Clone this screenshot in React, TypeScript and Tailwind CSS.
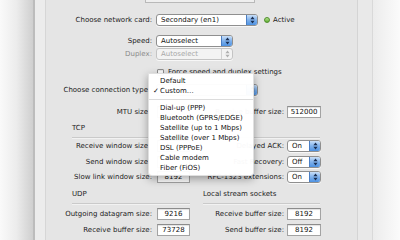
import React from 'react';

/* ─────────────── small aqua controls ─────────────── */
const Arrows: React.FC<{ color?: string }> = ({ color = '#1b2f52' }) => (
  <svg width="5" height="8" viewBox="0 0 5 8" aria-hidden="true">
    <path d="M2.5 0.5 L4.6 3.2 H0.4Z M2.5 7.5 L4.6 4.8 H0.4Z" fill={color} />
  </svg>
);

interface PopupProps {
  text?:     string;
  width:     string;
  disabled?: boolean;
}

const Popup: React.FC<PopupProps> = ({ text, width, disabled = false }) => (
  <div
    className={`${width} h-[12px] flex items-stretch rounded-[3px] border overflow-hidden shadow-[0_1px_0_rgba(255,255,255,0.7)] ${
      disabled ? 'border-[#c4c4c4] bg-[#f3f3f3]' : 'border-[#8f8f8f] bg-white'
    }`}
  >
    <span
      className={`flex-1 pl-[4px] leading-[11px] truncate ${
        disabled ? 'text-[#a8a8a8]' : 'text-[#111]'
      }`}
    >
      {text}
    </span>
    {disabled ? (
      <span className="w-[11px] flex items-center justify-center border-l border-[#d2d2d2]">
        <Arrows color="#b0b0b0" />
      </span>
    ) : (
      <span className="w-[11px] flex items-center justify-center border-l border-[#4b7fc4] bg-gradient-to-b from-[#c9dff8] via-[#7fb1ec] to-[#4d92e2]">
        <Arrows />
      </span>
    )}
  </div>
);

const Box: React.FC<{ value?: string; width?: string }> = ({ value, width = 'w-[33px]' }) => (
  <div
    className={`${width} h-[12px] bg-white border border-[#a3a3a3] border-t-[#8c8c8c] text-center leading-[10px] text-[#111] shadow-[inset_0_1px_1px_rgba(0,0,0,0.12)]`}
  >
    {value}
  </div>
);

const LeftLabel: React.FC<{ children: React.ReactNode; muted?: boolean }> = ({ children, muted }) => (
  <span className={`w-[106px] text-right whitespace-nowrap ${muted ? 'text-[#8a8a8a]' : 'text-[#222]'}`}>
    {children}
  </span>
);

const RightLabel: React.FC<{ children: React.ReactNode }> = ({ children }) => (
  <span className="w-[94px] text-right whitespace-nowrap text-[#222]">{children}</span>
);

/* ─────────────── connection menu ─────────────── */
const MENU_ITEMS = [
  'Dial-up (PPP)',
  'Bluetooth (GPRS/EDGE)',
  'Satellite (up to 1 Mbps)',
  'Satellite (over 1 Mbps)',
  'DSL (PPPoE)',
  'Cable modem',
  'Fiber (FiOS)',
];

const ConnectionMenu: React.FC = () => (
  <div className="absolute left-[148px] top-[73px] w-[106px] py-[2px] bg-[rgba(255,255,255,0.97)] rounded-b-[4px] shadow-[0_3px_8px_rgba(0,0,0,0.35)] border border-[rgba(0,0,0,0.12)] text-[#111]">
    <div className="h-[10px] leading-[10px] pl-[11px]">Default</div>
    <div className="h-[10px] leading-[10px] flex">
      <span className="w-[11px] pl-[4px]">✓</span>
      <span>Custom…</span>
    </div>
    <div className="h-[7px] flex items-center">
      <div className="w-full h-px bg-[#dcdcdc]" />
    </div>
    {MENU_ITEMS.map((item) => (
      <div key={item} className="h-[10px] leading-[10px] pl-[11px] whitespace-nowrap">
        {item}
      </div>
    ))}
  </div>
);

/* ─────────────── page ─────────────── */
export default function App() {
  return (
    <div
      className="relative w-[400px] h-[240px] overflow-hidden flex bg-white text-[7px]"
      style={{ fontFamily: '"DejaVu Sans", "Liberation Sans", sans-serif' }}
    >
      {/* left desktop shadow */}
      <div className="w-[33px] bg-gradient-to-r from-[#fafafa] via-[#ececec] to-[#cfcfcf]" />
      <div className="w-[2px] bg-[#bcbcbc]" />

      {/* window frame */}
      <div className="w-[11px] bg-[#ececec] border-r border-[#d6d6d6]" />

      {/* panel */}
      <div className="w-[311px] bg-[#e5e5e5] flex flex-col">
        {/* top box edge */}
        <div className="ml-[99px] w-[110px] h-[3px] bg-[#efefef] border-b border-x border-[#b9b9b9]" />

        <div className="flex items-center h-[14px] mt-[10px]">
          <LeftLabel>Choose network card:</LeftLabel>
          <div className="ml-[4px]">
            <Popup text="Secondary (en1)" width="w-[102px]" />
          </div>
          <span className="ml-[6px] w-[6px] h-[6px] rounded-full border border-[#4e8d2b] bg-gradient-to-b from-[#b7e48e] to-[#5eae2f]" />
          <span className="ml-[3px] text-[#222]">Active</span>
        </div>

        <div className="flex items-center h-[12px] mt-[8px]">
          <LeftLabel>Speed:</LeftLabel>
          <div className="ml-[4px]">
            <Popup text="Autoselect" width="w-[77px]" />
          </div>
        </div>

        <div className="flex items-center h-[12px] mt-[1px]">
          <LeftLabel muted>Duplex:</LeftLabel>
          <div className="ml-[4px]">
            <Popup text="Autoselect" width="w-[77px]" disabled />
          </div>
        </div>

        <div className="flex items-center h-[12px] mt-[6px]">
          <span className="ml-[111px] w-[7px] h-[7px] bg-white border border-[#8d8d8d] rounded-[1px] shadow-[inset_0_1px_1px_rgba(0,0,0,0.1)]" />
          <span className="ml-[4px] text-[#222]">Force speed and duplex settings</span>
        </div>

        <div className="flex items-center h-[12px] mt-[6px]">
          <span className="w-[102px] text-right whitespace-nowrap text-[#1a1a1a]">
            Choose connection type
          </span>
          <div className="ml-[8px]">
            <Popup width="w-[102px]" />
          </div>
        </div>

        <div className="flex items-center h-[12px] mt-[10px]">
          <span className="w-[102px] text-right whitespace-nowrap text-[#222]">MTU size</span>
          <div className="ml-[9px]">
            <Box />
          </div>
          <RightLabel>Receive buffer size:</RightLabel>
          <div className="ml-[3px]">
            <Box value="512000" width="w-[34px]" />
          </div>
        </div>

        <div className="flex items-center h-[12px] mt-[4px]">
          <span className="ml-[26px] text-[#222]">TCP</span>
        </div>
        <div className="ml-[26px] w-[248px] h-[2px] mt-[3px] bg-[#cacaca] border-b border-[#f2f2f2]" />

        <div className="flex items-center h-[12px] mt-[1px]">
          <span className="w-[102px] text-right whitespace-nowrap text-[#222]">Receive window size</span>
          <div className="ml-[9px]">
            <Box />
          </div>
          <RightLabel>Delayed ACK:</RightLabel>
          <div className="ml-[3px]">
            <Popup text="On" width="w-[34px]" />
          </div>
        </div>

        <div className="flex items-center h-[12px] mt-[4px]">
          <span className="w-[102px] text-right whitespace-nowrap text-[#222]">Send window size</span>
          <div className="ml-[9px]">
            <Box />
          </div>
          <RightLabel>Fast Recovery:</RightLabel>
          <div className="ml-[3px]">
            <Popup text="Off" width="w-[34px]" />
          </div>
        </div>

        <div className="flex items-center h-[12px] mt-[3px]">
          <LeftLabel>Slow link window size:</LeftLabel>
          <div className="ml-[5px]">
            <Box value="8192" />
          </div>
          <RightLabel>RFC-1323 extensions:</RightLabel>
          <div className="ml-[3px]">
            <Popup text="On" width="w-[34px]" />
          </div>
        </div>

        <div className="flex items-center h-[12px] mt-[5px]">
          <span className="ml-[26px] w-[131px] text-[#222]">UDP</span>
          <span className="text-[#222]">Local stream sockets</span>
        </div>
        <div className="flex mt-[3px]">
          <div className="ml-[26px] w-[118px] h-[2px] bg-[#cacaca] border-b border-[#f2f2f2]" />
          <div className="ml-[13px] w-[117px] h-[2px] bg-[#cacaca] border-b border-[#f2f2f2]" />
        </div>

        <div className="flex items-center h-[12px] mt-[3px]">
          <LeftLabel>Outgoing datagram size:</LeftLabel>
          <div className="ml-[5px]">
            <Box value="9216" />
          </div>
          <RightLabel>Receive buffer size:</RightLabel>
          <div className="ml-[3px]">
            <Box value="8192" width="w-[34px]" />
          </div>
        </div>

        <div className="flex items-center h-[12px] mt-[4px]">
          <LeftLabel>Receive buffer size:</LeftLabel>
          <div className="ml-[5px]">
            <Box value="73728" />
          </div>
          <RightLabel>Send buffer size:</RightLabel>
          <div className="ml-[3px]">
            <Box value="8192" width="w-[34px]" />
          </div>
        </div>
      </div>

      {/* right frame + desktop */}
      <div className="w-[16px] bg-[#e9e9e9] border-l border-[#d4d4d4] border-r border-r-[#d9d9d9]" />
      <div className="flex-1 bg-gradient-to-r from-[#ececec] to-[#fbfbfb]" />

      <ConnectionMenu />
    </div>
  );
}
